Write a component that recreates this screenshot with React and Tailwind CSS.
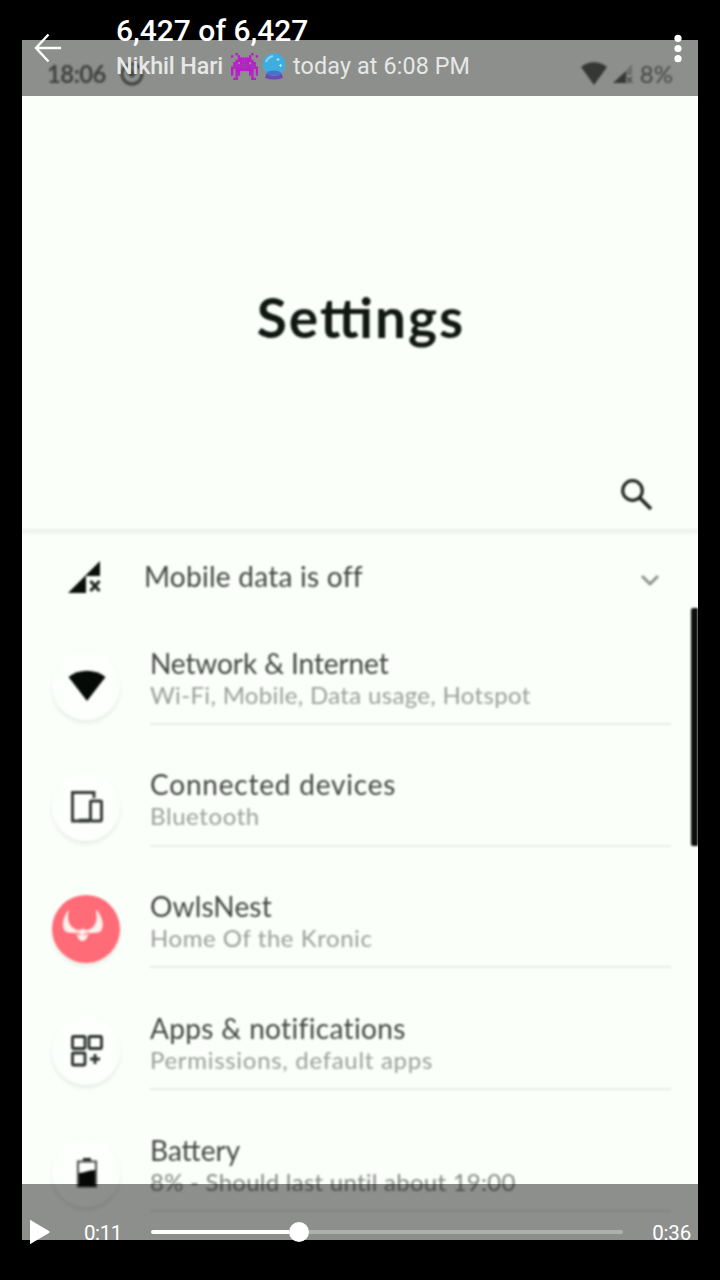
import React from 'react';

const WifiIcon = () => (
  <svg className="ml-px" width="40" height="34" viewBox="0 0 40 34">
    <path d="M1.500 8C12-.5 28-.5 38.500 8L20 32z" fill="#050a06" />
  </svg>
);

const DevicesIcon = () => (
  <svg className="ml-px" width="34" height="34" viewBox="0 0 34 34" fill="none" stroke="#333733" strokeWidth="2.900">
    <path d="M24 8V2.500H2.500V31H20" />
    <path d="M9 30.500H20" strokeWidth="3.500" />
    <rect x="20.500" y="11" width="11" height="20" rx="1" />
  </svg>
);

const AppsIcon = () => (
  <svg className="ml-px" width="34" height="34" viewBox="0 0 34 34" fill="none" stroke="#2b2f2b" strokeWidth="2.800">
    <rect x="2.500" y="2.500" width="12.500" height="12" rx="1" />
    <rect x="19" y="2.500" width="12.500" height="12" rx="1" />
    <rect x="2.500" y="19" width="12.500" height="12" rx="1" />
    <path d="M25 20v10M20 25h10" />
  </svg>
);

const BatteryIcon = () => (
  <svg className="ml-px" width="24" height="32" viewBox="0 0 24 32">
    <rect x="8" y="1" width="8" height="4" fill="#222" />
    <rect x="3" y="4.500" width="18" height="25" fill="none" stroke="#555955" strokeWidth="2.200" />
    <path d="M4 16c6 0 9-3 16-3v16H4z" fill="#050805" />
  </svg>
);

const OwlIcon = () => (
  <svg width="68" height="68" viewBox="0 0 68 68">
    <circle cx="34" cy="34" r="34" fill="#ff6b77" />
    <path
      d="M17 14C11 22 9 31 13 36c4 3 8 1 12 3l1 4 3 3h3l3-3 1-4c4-2 9 0 13-3 4-6 1-15-5-22 1 9 1 14-3 18-3 3-6 3-8 3l-2-2-2 2c-3 0-6 0-9-3-4-4-5-10-3-18z"
      fill="#fff0ea"
    />
    <path d="M24 37l5 3M37 37l-5 3" stroke="#ff8b90" strokeWidth="1.500" />
  </svg>
);

const SignalOffIcon = () => (
  <svg width="36" height="34" viewBox="0 0 36 34">
    <path d="M1 33L33 1v15H19v17z" fill="#0a0e0a" />
    <path d="M23.500 21l9 10M32.500 21l-9 10" stroke="#222622" strokeWidth="3.200" />
  </svg>
);

const INVADER = [
  '..#......#..',
  '#..#....#..#',
  '...######...',
  '..########..',
  '.##.####.##.',
  '.##########.',
  '############',
  '#.########.#',
  '#.##....##.#',
  '#.##....##.#',
  '..#......#..',
  '.##......##.',
];

function Invader() {
  return (
    <svg width="27" height="27" viewBox="0 0 12 12">
      {INVADER.flatMap((line, y) =>
        [...line].map((c, x) =>
          c === '#' ? <rect key={`${x}-${y}`} x={x} y={y} width="1.050" height="1.050" fill="#b81bc9" /> : null
        )
      )}
    </svg>
  );
}

const CrystalBall = () => (
  <svg width="24" height="27" viewBox="0 0 24 27">
    <path d="M5 19h14l2 6q-9 3-18 0z" fill="#6a4bb5" />
    <circle cx="12" cy="11.500" r="11.300" fill="#3eaee0" />
    <ellipse cx="12" cy="20" rx="7" ry="2.500" fill="#4a72c4" />
    <path d="M4 9q2-5 7-6" stroke="#8bd5f2" strokeWidth="2" fill="none" />
    <path d="M16 5v3M14.500 6.500h3M18.500 11v3M17 12.500h3" stroke="#b5e8f7" strokeWidth="1" />
  </svg>
);

const ITEMS = [
  { title: 'Network & Internet', sub: 'Wi-Fi, Mobile, Data usage, Hotspot', icon: <WifiIcon />, ls: 'tracking-[-0.1px]', subLs: 'tracking-[0.33px]' },
  { title: 'Connected devices', sub: 'Bluetooth', icon: <DevicesIcon />, ls: 'tracking-[0.8px]', subLs: 'tracking-[0.6px]' },
  { title: 'OwlsNest', sub: 'Home Of the Kronic', icon: <OwlIcon />, ls: 'tracking-[0.15px]', subLs: 'tracking-[0.55px]' },
  { title: 'Apps & notifications', sub: 'Permissions, default apps', icon: <AppsIcon />, ls: 'tracking-[0.35px]', subLs: 'tracking-[0.7px]' },
  { title: 'Battery', sub: '8% - Should last until about 19:00', icon: <BatteryIcon />, ls: 'tracking-[0px]', subLs: 'tracking-[0.25px]', dark: true },
];

function SettingsRow({ title, sub, icon, ls, subLs, dark }) {
  return (
    <div className="flex h-[121.8px] pl-[30px] pr-[27px]">
      <div className="mt-[48.5px] flex size-[68px] shrink-0 items-center justify-center rounded-full bg-[#fcfffc] shadow-[0_3px_4px_rgba(0,0,0,0.08)]">
        {icon}
      </div>
      <div className="ml-[30px] flex flex-1 flex-col border-b-2 border-[#e9ede9] pt-[43.5px]">
        <div className={`h-8 whitespace-nowrap text-[28px] leading-8 text-[#424642] ${ls}`}>{title}</div>
        <div className={`h-8 whitespace-nowrap text-[24px] leading-8 ${dark ? 'text-[#858985]' : 'text-[#9a9e9a]'} ${subLs}`}>{sub}</div>
      </div>
    </div>
  );
}

function StatusBar() {
  return (
    <div className="flex h-14 items-center pl-[25px] pr-[25px] pt-[11px] text-[24px] text-[#747874]">
      <span className="w-[60px] font-bold tracking-[-0.6px]">18:06</span>
      <svg className="ml-[13px]" width="24" height="24" viewBox="0 0 24 24" fill="none" stroke="#747874" strokeWidth="3">
        <circle cx="12" cy="12" r="10" />
        <path d="M12 5v7M8 10l4 4 4-4" />
      </svg>
      <svg className="ml-auto" width="28" height="25" viewBox="0 0 28 25">
        <path d="M1 6C8-.5 20-.5 27 6L14 24z" fill="#5d625c" />
      </svg>
      <svg className="ml-1" width="22" height="22" viewBox="0 0 22 22">
        <path d="M1 20L14 8v12z" fill="#5d625c" />
        <path d="M14 8l6-7v11h-6z" fill="#c1c5c0" />
        <path d="M15 14l5 6M20 14l-5 6" stroke="#858985" strokeWidth="1.800" />
      </svg>
      <span className="ml-[6px] text-[#7a7e7a]">8%</span>
    </div>
  );
}

function VideoFrame() {
  return (
    <div className="mx-[22px] mt-10 h-[1200px] w-[676px] overflow-hidden bg-[#fbfffa]">
      <div className="relative h-full font-['Lato',sans-serif] blur-[0.9px]">
        <StatusBar />
        <div className="flex h-[436px] flex-col items-center border-b-[3px] border-[#edf1ed] pt-[189px] shadow-[0_2px_4px_rgba(0,0,0,0.04)]">
          <h1 className="pl-[2px] text-[55px] font-bold leading-[64px] tracking-[2px] text-[#101610] [font-feature-settings:'liga']">Settings</h1>
          <svg className="ml-auto mr-[44px] mt-[128.5px]" width="34" height="34" viewBox="0 0 34 34" fill="none" stroke="#222722">
            <circle cx="12.500" cy="12.500" r="9.800" strokeWidth="3.200" />
            <path d="M19.500 19.500L31 31" strokeWidth="3.800" />
          </svg>
        </div>
        <div className="flex h-[71px] items-center pl-[45px] pr-[38px] pt-[18px]">
          <SignalOffIcon />
          <span className="-mt-px ml-[41px] whitespace-nowrap text-[28px] leading-8 tracking-[0.26px] text-[#424642]">Mobile data is off</span>
          <svg className="ml-auto mt-2" width="20" height="14" viewBox="0 0 20 14" fill="none" stroke="#8d918d" strokeWidth="3">
            <path d="M2 2l8 8 8-8" />
          </svg>
        </div>
        {ITEMS.map((item) => (
          <SettingsRow key={item.title} {...item} />
        ))}
        <div className="absolute right-0 top-[568px] h-[238px] w-[7px] rounded-l-[2px] bg-[#0a0f0a]" />
      </div>
    </div>
  );
}

function TopBar() {
  return (
    <div className="absolute inset-x-0 top-0 flex h-24 bg-black/[0.44] text-white">
      <svg className="ml-[34px] mt-[33px]" width="28" height="30" viewBox="0 0 28 30" fill="none" stroke="#fff" strokeWidth="2.400">
        <path d="M27 15H2M14.500 1.500L2 15l12.500 13.500" />
      </svg>
      <div className="ml-[54px] flex-1 pt-[14px]">
        <div className="text-[30px] font-medium leading-[34px]">6,427 of 6,427</div>
        <div className="flex h-9 items-center whitespace-nowrap text-[23.3px] text-[#e6e7e6]">
          <span className="font-medium tracking-[-0.13px]">Nikhil Hari</span>
          <span className="ml-2 flex gap-1">
            <Invader />
            <CrystalBall />
          </span>
          <span className="ml-[7px] tracking-[0.13px]">today at 6:08 PM</span>
        </div>
      </div>
      <svg className="mr-[38px] mt-[34px]" width="8" height="30" viewBox="0 0 8 30" fill="#fff">
        <circle cx="4" cy="4.300" r="3.600" />
        <circle cx="4" cy="14.500" r="3.600" />
        <circle cx="4" cy="24.700" r="3.600" />
      </svg>
    </div>
  );
}

function PlayerControls() {
  return (
    <div className="absolute inset-x-0 top-[1184px] flex h-24 items-center bg-black/[0.44] pl-[30px] pr-[29px] text-[20.5px] leading-[24px] text-white">
      <svg width="20" height="24" viewBox="0 0 20 24">
        <path d="M0 0v24q1 0 2-1l17-10q1-1 0-2L2 1Q1 0 0 0z" fill="#fff" />
      </svg>
      <span className="ml-[34px] mt-[2px] w-[67px] tracking-[-0.4px]">0:11</span>
      <div className="flex flex-1 items-center">
        <div className="h-1 w-[138px] rounded-l bg-white" />
        <div className="size-5 rounded-full bg-white" />
        <div className="h-1 flex-1 rounded-r bg-white/30" />
      </div>
      <span className="ml-[29px] mt-[2px] tracking-[-0.2px]">0:36</span>
    </div>
  );
}

export default function App() {
  return (
    <div className="relative h-[1280px] w-[720px] overflow-hidden bg-black font-['Roboto',sans-serif]">
      <div className="flex">
        <VideoFrame />
      </div>
      <TopBar />
      <PlayerControls />
    </div>
  );
}
